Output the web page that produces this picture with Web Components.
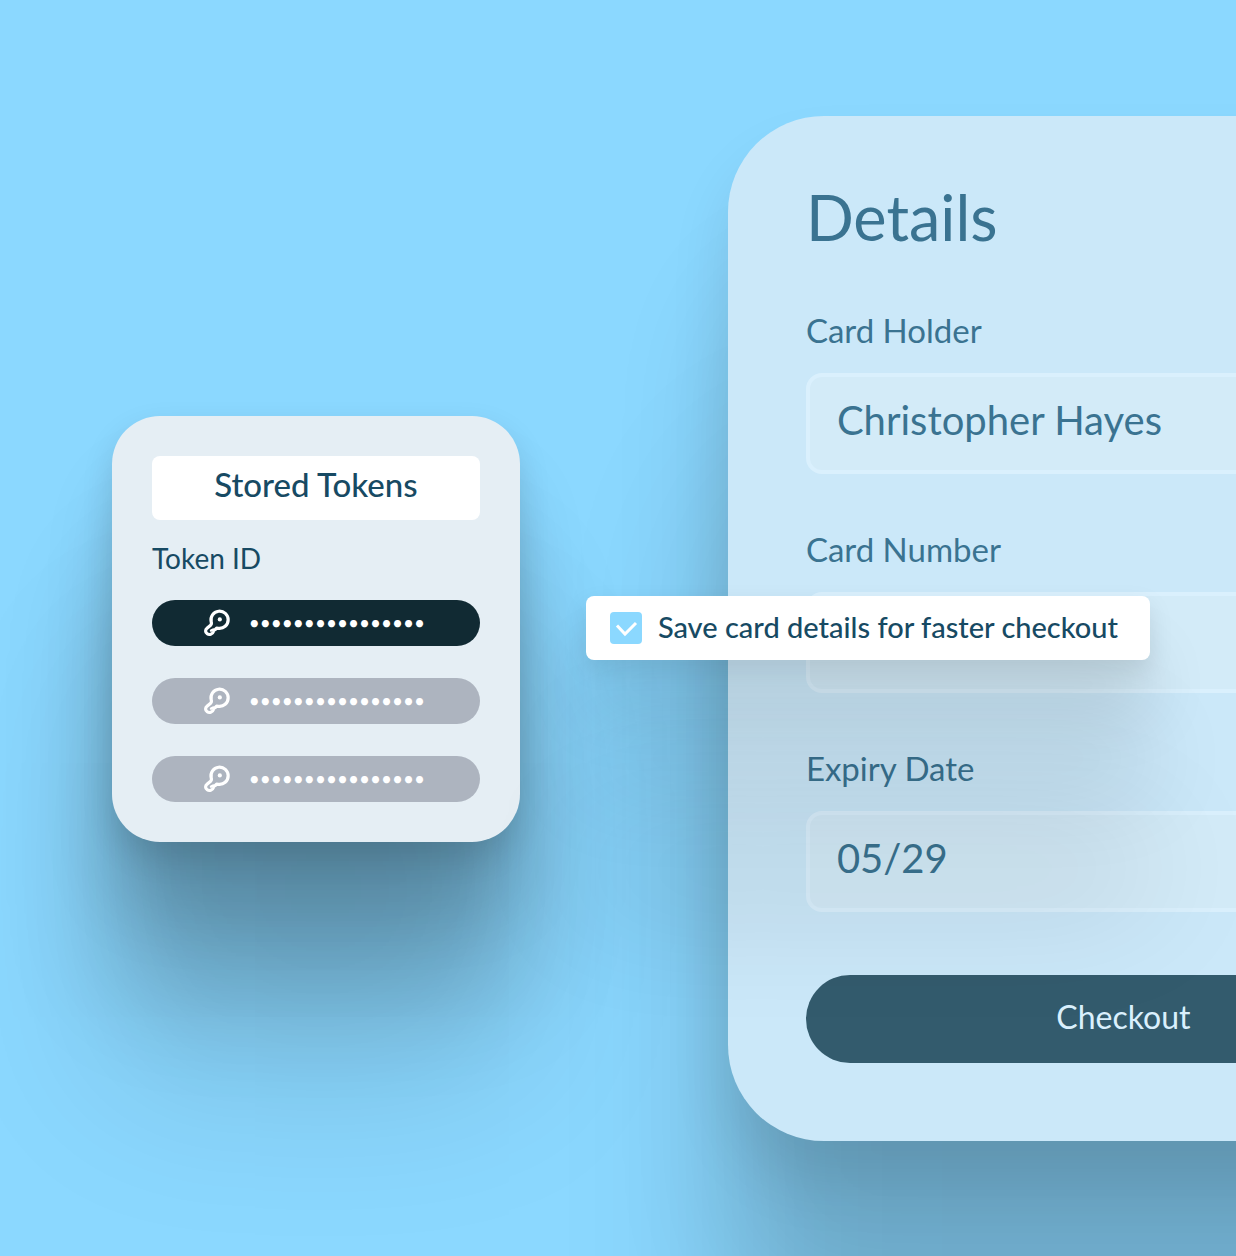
<!DOCTYPE html>
<html lang="en">
<head>
<meta charset="utf-8">
<meta name="viewport" content="width=device-width, initial-scale=1">
<title>Stored Tokens</title>
<style>
body {
  margin: 0;
  background: #8bd8ff;
  color: #174a63;
  font-family: Lato, "Liberation Sans", sans-serif;
}
</style>
</head>
<body>

<checkout-stage>
  <token-panel slot="tokens" heading="Stored Tokens" label="Token ID">
    <token-pill active></token-pill>
    <token-pill></token-pill>
    <token-pill></token-pill>
  </token-panel>
  <card-details slot="details" heading="Details">
    <card-field label="Card Holder" value="Christopher Hayes"></card-field>
    <card-field label="Card Number" value=""></card-field>
    <card-field label="Expiry Date" value="05/29"></card-field>
    <save-option slot="option">Save card details for faster checkout</save-option>
  </card-details>
</checkout-stage>

<template id="checkout-stage">
  <style>
    :host {
      display: block;
      overflow: hidden;
    }
    main {
      display: flex;
      align-items: center;
      gap: 208px;
      min-height: 100vh;
      padding: 1px 0 0 112px;
      box-sizing: border-box;
    }
    ::slotted(token-panel) { flex: 0 0 33vw; }
    ::slotted(card-details) { flex: 0 0 64vw; }
  </style>
  <main>
    <slot name="tokens"></slot>
    <slot name="details"></slot>
  </main>
</template>

<template id="token-panel">
  <style>
    :host {
      display: block;
      box-sizing: border-box;
      padding: 40px;
      border-radius: 48px;
      background: #e5eef4;
      box-shadow:
        0 14px 32px rgba(0, 0, 0, .12),
        0 64px 70px rgba(0, 0, 0, .13),
        0 150px 110px rgba(0, 0, 0, .18),
        0 240px 170px rgba(0, 0, 0, .13);
    }
    h2 {
      margin: 0;
      border-radius: 8px;
      background: #fff;
      text-align: center;
      font-size: 33px;
      font-weight: 500;
      line-height: 56px;
      padding-bottom: 8px;
    }
    h3 {
      margin: 20px 0 24px;
      font-size: 28px;
      font-weight: 400;
      line-height: 36px;
    }
    .list {
      display: flex;
      flex-direction: column;
      gap: 32px;
    }
  </style>
  <h2></h2>
  <h3></h3>
  <div class="list"><slot></slot></div>
</template>

<template id="token-pill">
  <style>
    :host { display: block; }
    button {
      display: flex;
      align-items: center;
      justify-content: center;
      gap: 18px;
      width: 100%;
      height: 46px;
      padding: 0 4px 0 0;
      border: 0;
      border-radius: 23px;
      background: #adb4bf;
      color: #fff;
      font: inherit;
      font-size: 19px;
    }
    :host([active]) button { background: #112a33; }
    svg { display: block; }
  </style>
  <button type="button" aria-label="Stored token">
    <svg width="28" height="28" viewBox="0 0 28 28" fill="none" stroke="#fff" stroke-width="3.200" stroke-linecap="round" stroke-linejoin="round">
      <path d="M8.200 12.800A8.600 8.600 0 1 1 15.400 19.300L13.600 19.200L12.200 20.600L10.800 20.800L10.400 22.600C9.600 25.400 6.200 26.200 4.200 24.800C2 23.200 2.200 20.600 4 19.200L7.600 16.200C8.600 15.400 8.600 14.200 8.200 12.800"/>
      <path d="M9.600 20.800L8 21.600" stroke-width="2.400"/>
      <circle cx="16.800" cy="10.400" r="2.100" fill="#fff" stroke="none"/>
    </svg>
    <span>••••••••••••••••</span>
  </button>
</template>

<template id="card-details">
  <style>
    :host {
      display: block;
      position: relative;
      box-sizing: border-box;
      padding: 78px;
      border-radius: 96px;
      background: #cbe8f9;
      color: #3a7391;
      box-shadow:
        0 40px 60px rgba(0, 0, 0, .1),
        0 160px 120px rgba(0, 0, 0, .12),
        0 350px 180px rgba(0, 0, 0, .12);
    }
    form {
      display: flex;
      flex-direction: column;
      gap: 63px;
    }
    h1 {
      margin: 0;
      font-size: 63px;
      font-weight: 400;
      line-height: 46px;
      padding-bottom: 10px;
    }
    .fields {
      display: flex;
      flex-direction: column;
      gap: 58px;
    }
    button {
      height: 88px;
      padding: 0 0 6px;
      border: 0;
      border-radius: 44px;
      background: #335b6d;
      color: #daf0fd;
      font: inherit;
      font-size: 32px;
    }
    /* the option floats over the left edge of the card */
    ::slotted(save-option) {
      position: absolute;
      left: -142px;
      top: 0;
      bottom: 1px;
      height: fit-content;
      margin: auto 0;
    }
  </style>
  <form>
    <h1></h1>
    <div class="fields"><slot></slot></div>
    <button type="button">Checkout</button>
  </form>
  <slot name="option"></slot>
</template>

<template id="card-field">
  <style>
    :host {
      display: flex;
      flex-direction: column;
      gap: 26px;
    }
    label {
      font-size: 33px;
      line-height: 34px;
    }
    input {
      box-sizing: border-box;
      width: 100%;
      height: 101px;
      padding: 0 27px 8px;
      border: 4px solid #daf0fd;
      border-radius: 16px;
      background: #d3ebf8;
      color: inherit;
      font: inherit;
      font-size: 40px;
    }
  </style>
  <label for="field"></label>
  <input id="field" type="text">
</template>

<template id="save-option">
  <style>
    :host {
      display: block;
      min-width: 564px;
      border-radius: 8px;
      background: #fff;
      color: #174a63;
      box-shadow:
        0 10px 24px rgba(0, 0, 0, .1),
        0 56px 64px rgba(0, 0, 0, .11),
        0 130px 90px rgba(0, 0, 0, .11),
        0 240px 130px rgba(0, 0, 0, .14);
    }
    label {
      display: flex;
      align-items: center;
      gap: 16px;
      height: 64px;
      padding: 0 24px;
      font-size: 29px;
      font-weight: 500;
      white-space: nowrap;
    }
    .box {
      display: grid;
      width: 32px;
      height: 32px;
    }
    input, svg { grid-area: 1 / 1; }
    input {
      appearance: none;
      width: 32px;
      height: 32px;
      margin: 0;
      border-radius: 4px;
      background: #8bd8ff;
    }
    svg { pointer-events: none; visibility: hidden; }
    input:checked + svg { visibility: visible; }
    .text { padding-bottom: 4px; }
  </style>
  <label>
    <span class="box">
      <input type="checkbox" checked>
      <svg width="32" height="32" viewBox="0 0 32 32" fill="none" stroke="#fff" stroke-width="3">
        <path d="M7 13.500L15 22L26 11"/>
      </svg>
    </span>
    <span class="text"><slot></slot></span>
  </label>
</template>

<script>
class BaseElement extends HTMLElement {
  constructor() {
    super();
    const template = document.getElementById(this.localName);
    this.attachShadow({ mode: "open" });
    this.shadowRoot.appendChild(template.content.cloneNode(true));
  }
  find(selector) {
    return this.shadowRoot.querySelector(selector);
  }
}

class CheckoutStage extends BaseElement {}

class TokenPanel extends BaseElement {
  connectedCallback() {
    this.find("h2").textContent = this.getAttribute("heading");
    this.find("h3").textContent = this.getAttribute("label");
  }
}

class TokenPill extends BaseElement {
  connectedCallback() {
    this.find("button").addEventListener("click", () => this.select());
  }
  select() {
    for (const pill of this.parentElement.querySelectorAll("token-pill")) {
      pill.toggleAttribute("active", pill === this);
    }
  }
}

class CardDetails extends BaseElement {
  connectedCallback() {
    this.find("h1").textContent = this.getAttribute("heading");
  }
}

class CardField extends BaseElement {
  connectedCallback() {
    this.find("label").textContent = this.getAttribute("label");
    this.find("input").value = this.getAttribute("value");
  }
}

class SaveOption extends BaseElement {}

customElements.define("checkout-stage", CheckoutStage);
customElements.define("token-panel", TokenPanel);
customElements.define("token-pill", TokenPill);
customElements.define("card-details", CardDetails);
customElements.define("card-field", CardField);
customElements.define("save-option", SaveOption);
</script>
</body>
</html>
